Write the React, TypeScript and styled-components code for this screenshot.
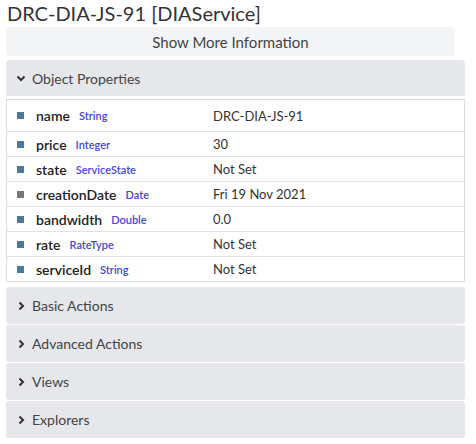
import styled, { createGlobalStyle } from "styled-components";

const GlobalStyle = createGlobalStyle`
  body {
    margin: 0;
    background: #ffffff;
    font-family: Lato, "Open Sans", sans-serif;
  }
`;

interface Prop {
  name: string;
  type: string;
  value: string;
  muted?: boolean;
}

const props: Prop[] = [
  { name: "name", type: "String", value: "DRC-DIA-JS-91" },
  { name: "price", type: "Integer", value: "30" },
  { name: "state", type: "ServiceState", value: "Not Set" },
  { name: "creationDate", type: "Date", value: "Fri 19 Nov 2021", muted: true },
  { name: "bandwidth", type: "Double", value: "0.0" },
  { name: "rate", type: "RateType", value: "Not Set" },
  { name: "serviceId", type: "String", value: "Not Set" },
];

const sections = ["Basic Actions", "Advanced Actions", "Views", "Explorers"];

const ChevronDown = () => (
  <svg width="12" height="12" viewBox="0 0 12 12">
    <path d="M2.5 4.5 L6 8 L9.5 4.5" fill="none" stroke="#333" strokeWidth="2" />
  </svg>
);

const ChevronRight = () => (
  <svg width="12" height="12" viewBox="0 0 12 12">
    <path d="M4.5 2.5 L8 6 L4.5 9.5" fill="none" stroke="#333" strokeWidth="2" />
  </svg>
);

const App = () => {
  return (
    <Page>
      <GlobalStyle />
      <Title>DRC-DIA-JS-91 [DIAService]</Title>
      <MoreButton>Show More Information</MoreButton>
      <Panel>
        <PanelHeader $open>
          <ChevronDown />
          <span>Object Properties</span>
        </PanelHeader>
        <Table>
          {props.map((p, i) => (
            <Row key={p.name} $first={i === 0}>
              <NameCell>
                <Marker $muted={p.muted} />
                <PropName>{p.name}</PropName>
                <PropType>{p.type}</PropType>
              </NameCell>
              <Value>{p.value}</Value>
            </Row>
          ))}
        </Table>
      </Panel>
      <Sections>
        {sections.map((s) => (
          <PanelHeader key={s} $tall>
            <ChevronRight />
            <span>{s}</span>
          </PanelHeader>
        ))}
      </Sections>
    </Page>
  );
};

export default App;

const Page = styled.div`
  width: 459px;
  padding: 1px 0 0 6px;
  display: flex;
  flex-direction: column;
`;

const Title = styled.div`
  font-size: 20px;
  line-height: 24px;
  color: #333;
  padding-left: 1px;
  margin-bottom: 2px;
`;

const MoreButton = styled.div`
  width: 449px;
  height: 29px;
  background: #f3f4f6;
  border-radius: 4px;
  display: flex;
  align-items: center;
  justify-content: center;
  font-size: 15px;
  color: #444;
  margin-bottom: 4px;
`;

const Panel = styled.div`
  display: flex;
  flex-direction: column;
  gap: 3px;
`;

const PanelHeader = styled.div<{ $open?: boolean; $tall?: boolean }>`
  height: ${(p) => (p.$tall ? "37px" : "36px")};
  background: #e5e7eb;
  border-radius: ${(p) => (p.$open ? "4px 4px 0 0" : "3px")};
  display: flex;
  align-items: center;
  gap: 5px;
  padding-left: 9px;
  font-size: 14px;
  color: #444;
`;

const Table = styled.div`
  border: 1px solid #dcdcdc;
  display: flex;
  flex-direction: column;
`;

const Row = styled.div<{ $first?: boolean }>`
  height: ${(p) => (p.$first ? "31px" : "24px")};
  display: flex;
  align-items: center;
  border-top: ${(p) => (p.$first ? "none" : "1px solid #e2e2e2")};
`;

const NameCell = styled.div`
  width: 196px;
  display: flex;
  align-items: center;
  padding-left: 10px;
`;

const Marker = styled.div<{ $muted?: boolean }>`
  width: 7px;
  height: 7px;
  background: ${(p) => (p.$muted ? "#777" : "#4a7a9c")};
  margin-right: 12px;
`;

const PropName = styled.span`
  font-size: 14px;
  font-weight: 600;
  color: #222;
  margin-right: 9px;
`;

const PropType = styled.span`
  font-size: 11px;
  font-weight: 600;
  color: #4747d8;
`;

const Value = styled.div`
  font-size: 13px;
  color: #333;
`;

const Sections = styled.div`
  margin-top: 5px;
  display: flex;
  flex-direction: column;
  gap: 1px;
`;
